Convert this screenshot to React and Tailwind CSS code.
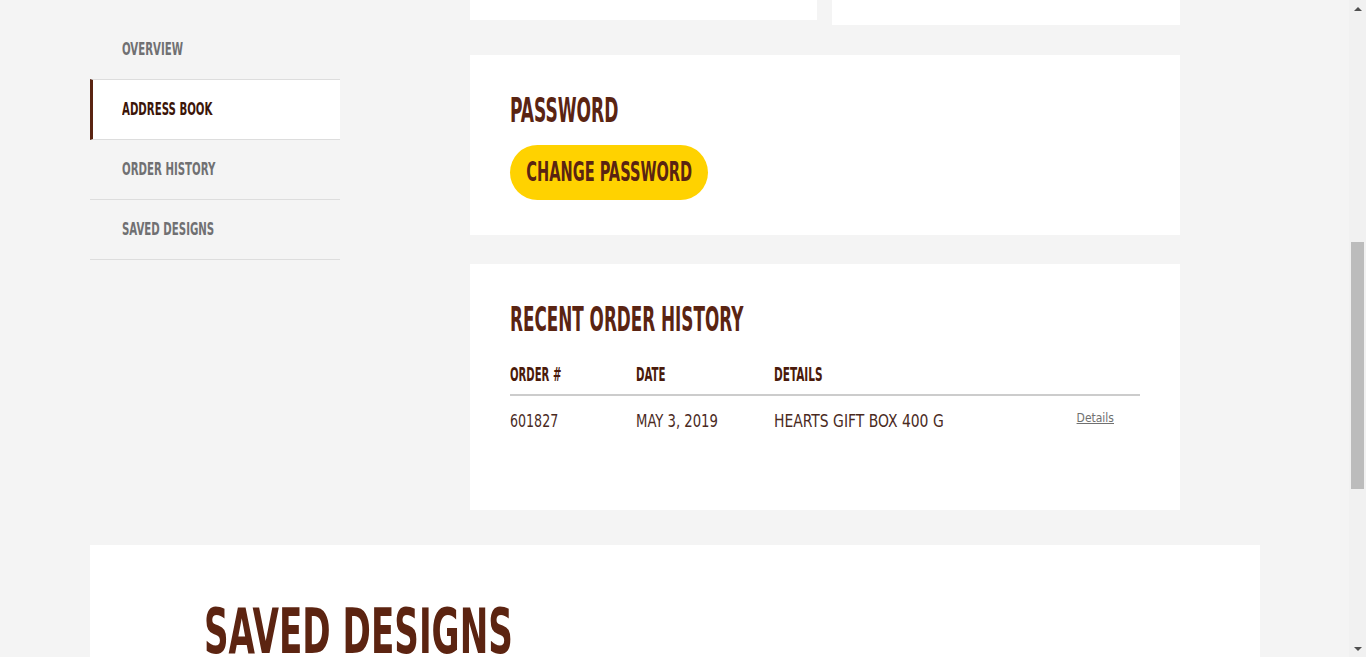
import React from "react";

const F = { fontFamily: '"DejaVu Sans Condensed", "DejaVu Sans", sans-serif' };

function NavItem({ label, active, border }) {
  return (
    <div
      className={
        "flex items-center pb-[2px] text-[18px] font-bold " +
        (active
          ? "h-[61px] bg-white border-l-[3px] border-l-[#5a2412] border-y border-y-[#dddddd] pl-[29px] text-[#3b1508]"
          : "h-[60px] pl-[32px] text-[#707072]") +
        (border ? " border-b border-b-[#dddddd]" : "")
      }
    >
      <span className="inline-block whitespace-nowrap origin-left scale-x-[0.63]">{label}</span>
    </div>
  );
}

export default function App() {
  return (
    <div className="h-[657px] w-full overflow-hidden flex bg-[#f4f4f4]" style={F}>
      <div className="flex-1 overflow-hidden">
        <div className="flex pl-[90px]">
          <div className="w-[250px] mt-[19px] shrink-0">
            <NavItem label="OVERVIEW" />
            <NavItem label="ADDRESS BOOK" active />
            <NavItem label="ORDER HISTORY" border />
            <NavItem label="SAVED DESIGNS" border />
          </div>
          <div className="ml-[130px] w-[710px] flex flex-col">
            <div className="flex items-start gap-[15px]">
              <div className="w-[347px] h-[20px] bg-white" />
              <div className="w-[348px] h-[25px] bg-white" />
            </div>
            <div className="mt-[30px] h-[180px] bg-white pl-[40px] pt-[38px]">
              <h2 className="text-[33px] leading-[36px] font-bold text-[#5a2412]">
                <span className="inline-block whitespace-nowrap origin-left scale-x-[0.575]">PASSWORD</span>
              </h2>
              <button className="mt-[16px] h-[55px] w-[198px] rounded-full bg-[#ffd200] text-[#5a2412] text-[27px] font-bold flex items-center justify-center">
                <span className="inline-block whitespace-nowrap origin-center scale-x-[0.6]">CHANGE PASSWORD</span>
              </button>
            </div>
            <div className="mt-[29px] h-[246px] bg-white px-[40px] pt-[38px]">
              <h2 className="text-[33px] leading-[36px] font-bold text-[#5a2412]">
                <span className="inline-block whitespace-nowrap origin-left scale-x-[0.566]">RECENT ORDER HISTORY</span>
              </h2>
              <div className="mt-[26px] flex h-[32px] items-start border-b-2 border-[#cccccc] text-[19px] leading-[20px] font-bold text-[#4a1a0a]">
                <div className="w-[126px]">
                  <span className="inline-block whitespace-nowrap origin-left scale-x-[0.59]">ORDER #</span>
                </div>
                <div className="w-[138px]">
                  <span className="inline-block whitespace-nowrap origin-left scale-x-[0.6]">DATE</span>
                </div>
                <div>
                  <span className="inline-block whitespace-nowrap origin-left scale-x-[0.615]">DETAILS</span>
                </div>
              </div>
              <div className="flex h-[48px] items-center text-[18px] text-[#4a2a1e]">
                <div className="w-[126px]">
                  <span className="inline-block whitespace-nowrap origin-left scale-x-[0.78]">601827</span>
                </div>
                <div className="w-[138px]">
                  <span className="inline-block whitespace-nowrap origin-left scale-x-[0.815]">MAY 3, 2019</span>
                </div>
                <div className="flex-1">
                  <span className="inline-block whitespace-nowrap origin-left scale-x-[0.86]">HEARTS GIFT BOX 400 G</span>
                </div>
                <a className="mr-[26px] mb-[4px] text-[12px] text-[#707070] underline">Details</a>
              </div>
            </div>
          </div>
        </div>
        <div className="ml-[90px] mt-[35px] w-[1170px] h-[200px] bg-white pl-[114px] pt-[52px]">
          <h1 className="text-[63px] leading-[70px] font-bold text-[#5c2411]">
            <span className="inline-block whitespace-nowrap origin-left scale-x-[0.603]">SAVED DESIGNS</span>
          </h1>
        </div>
      </div>
      <div className="w-[17px] shrink-0 bg-[#f1f1f1] flex flex-col items-center">
        <div className="h-[17px] flex items-center justify-center">
          <div className="w-0 h-0 border-x-[4px] border-x-transparent border-b-[4px] border-b-[#505050]" />
        </div>
        <div className="mt-[225px] w-[13px] h-[247px] bg-[#bcbcbc]" />
        <div className="flex-1" />
        <div className="h-[17px] flex items-center justify-center">
          <div className="w-0 h-0 border-x-[4px] border-x-transparent border-t-[4px] border-t-[#505050]" />
        </div>
      </div>
    </div>
  );
}
